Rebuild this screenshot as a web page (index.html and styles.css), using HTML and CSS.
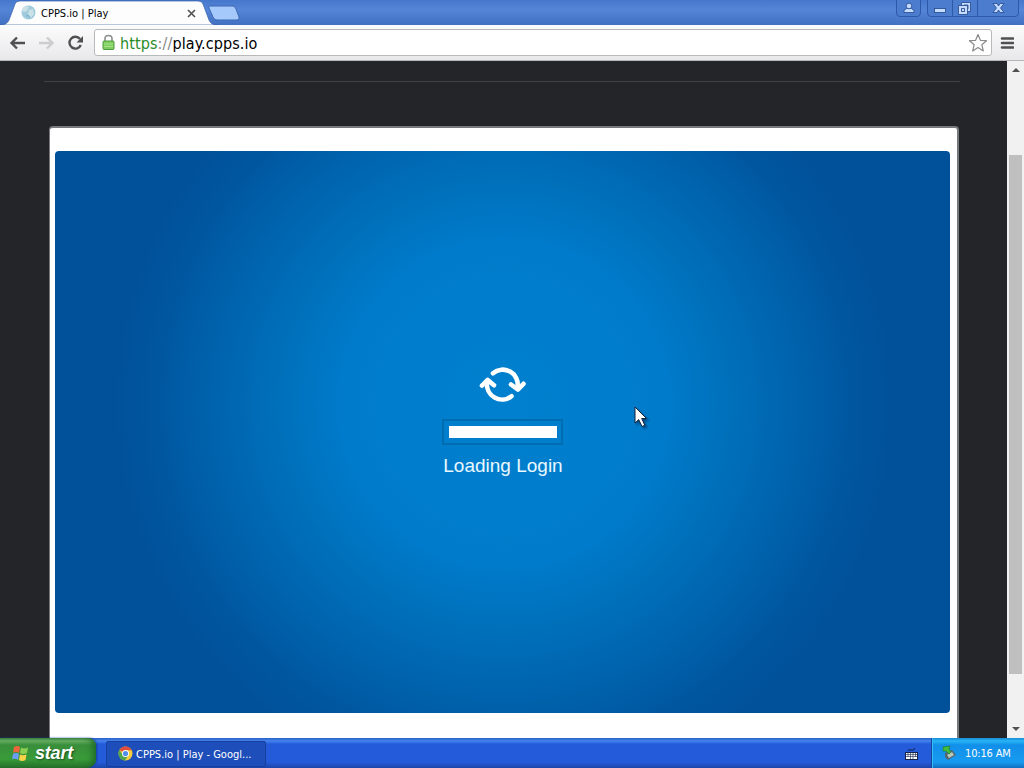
FILE: index.html
```html
<!DOCTYPE html>
<html>
<head>
    <meta charset="utf-8">
    <title>CPPS.io | Play</title>
    <link rel="stylesheet" href="styles.css">
</head>
<body>
    <div class="tabs">
        <svg class="tab-shape" width="240" height="25" viewBox="0 0 240 25">
            <path d="M0 25 Q7 25 9 20 L15 4 Q16 1 20 1 H198 Q202 1 203 4 L209 20 Q211 25 217 25 Z" fill="#fdfdfe" stroke="#315da9" stroke-width=".7"/>
            <path d="M210 6 H233 Q235 6 236 9 L239 17 Q240 20 237 20 H217 Q214 20 213 17 L209 8 Q208 6 210 6Z" fill="#a4c9fa" stroke="#3c68b5"/>
        </svg>
        <svg class="favicon" width="15" height="15" viewBox="0 0 15 15">
            <circle cx="7.500" cy="7.500" r="7" fill="#9fcbdd"/>
            <path d="M2 3 Q5 0 8 2 L6 6 L3 7 L1 6Z M8 5 L12 4 L13 9 L10 13 L7 9Z" fill="#c9e1e7"/>
            <path d="M5 11 Q8 9 9 13" fill="none" stroke="#73aecb"/>
        </svg>
        <span class="tab-title">CPPS.io | Play</span>
        <svg class="tab-close" width="9" height="9" viewBox="0 0 9 9"><path d="M1 1 L8 8 M8 1 L1 8" stroke="#555" stroke-width="1.700"/></svg>
        <svg class="window-buttons" width="128" height="18" viewBox="0 0 128 18">
            <g fill="#4b7ccd" stroke="#2e58a8">
                <path d="M.5 -1 V13 Q.5 16.500 4 16.500 H21 Q24.500 16.500 24.500 13 V-1"/>
                <path d="M31.500 -1 V13 Q31.500 16.500 35 16.500 H119 Q122.500 16.500 122.500 13 V-1 M56.500 0 V16 M81.500 0 V16"/>
            </g>
            <g fill="#c4dcff" stroke="#24478c" stroke-width=".8">
                <path d="M8 12.500 V10.500 L10.500 8.500 H15.500 L18 10.500 V12.500Z"/>
                <circle cx="13" cy="6" r="2.800"/>
                <rect x="38.500" y="8.500" width="11" height="4"/>
                <path fill-rule="evenodd" d="M65.500 2.500 H74.500 V11.500 H65.500Z M68 5 V9 H72 V5Z"/>
                <path fill-rule="evenodd" d="M62.500 5.500 H71.500 V14.500 H62.500Z M65.500 8.500 V11.500 H68.500 V8.500Z"/>
                <path d="M97 3.500 H101 L102.500 6 L104 3.500 H108 L104.500 8 L108 12.500 H104 L102.500 10 L101 12.500 H97 L100.500 8Z"/>
            </g>
        </svg>
    </div>

    <div class="toolbar">
        <svg class="nav" width="88" height="24" viewBox="0 0 88 24" fill="none" stroke-width="2.400">
            <path d="M25 12 H12 M17 6.500 L11.500 12 L17 17.500" stroke="#505052"/>
            <path d="M39 12 H52 M47 6.500 L52.500 12 L47 17.500" stroke="#cdcdcf"/>
            <path d="M80 8 A5.900 5.900 0 1 0 80.800 14" stroke="#505052"/>
            <path d="M83 5 V11.500 H76.500Z" fill="#505052"/>
        </svg>
        <div class="address">
            <svg class="lock" width="13" height="17" viewBox="0 0 13 17">
                <path d="M3 8 V4.500 Q3 1.500 6.500 1.500 Q10 1.500 10 4.500 V8" fill="none" stroke="#8b8f8b" stroke-width="1.600"/>
                <rect x="1" y="7" width="11" height="8.500" rx="1" fill="#80cd61" stroke="#4f9a3c"/>
                <path d="M2 10 H11 M2 12.500 H11" stroke="#a4e386"/>
            </svg>
            <span class="url"><span class="secure">https</span><span class="slashes">://</span>play.cpps.io</span>
            <svg class="star" width="20" height="20" viewBox="0 0 20 20"><path d="M10 1.500 L12.400 7.300 L18.500 7.700 L13.800 11.700 L15.300 18 L10 14.500 L4.700 18 L6.200 11.700 L1.500 7.700 L7.600 7.300Z" fill="#fff" stroke="#8b8b8b" stroke-width="1.200" stroke-linejoin="round"/></svg>
        </div>
        <svg class="menu" width="14" height="14" viewBox="0 0 14 14"><path d="M2 2.500 H13 M2 7 H13 M2 11.500 H13" stroke="#505052" stroke-width="2.600" stroke-linecap="round"/></svg>
    </div>

    <div class="viewport">
        <div class="page">
            <div class="rule"></div>
            <div class="card">
                <div class="game">
                    <svg class="spinner" width="48" height="38" viewBox="0 0 48 38" fill="none" stroke="#fff" stroke-width="4.600" stroke-linecap="round">
                        <path d="M14 7.200 A15 14.800 0 0 1 38.500 21"/>
                        <path d="M32.500 30.200 A15 14.800 0 0 1 8.200 16.400"/>
                        <path d="M32 18.500 L38.800 23.500 L44.500 17.800" stroke-linejoin="round"/>
                        <path d="M3 19.700 L8.700 14 L15 19.200" stroke-linejoin="round"/>
                    </svg>
                    <div class="progress"><div class="bar"></div></div>
                    <div class="loading">Loading Login</div>
                </div>
            </div>
        </div>
        <div class="scrollbar">
            <svg width="8" height="4" viewBox="0 0 8 4"><path d="M0 4 L4 0 L8 4Z" fill="#505050"/></svg>
            <div class="thumb"></div>
            <svg width="8" height="4" viewBox="0 0 8 4"><path d="M0 0 L4 4 L8 0Z" fill="#505050"/></svg>
        </div>
    </div>

    <div class="taskbar">
        <div class="start">
            <svg width="19" height="19" viewBox="0 0 19 19">
                <path d="M3 3 Q6 1 9 3 L8 9 Q5 7 2 9Z" fill="#ef653b"/>
                <path d="M10 3.500 Q13 5.500 17 3.500 L16 9 Q12 11 9 9Z" fill="#8bd052"/>
                <path d="M2 10 Q5 8 8 10 L7 16 Q4 14 1 15.500Z" fill="#6b9df4"/>
                <path d="M9 10.500 Q12 12 15.500 10.500 L14.500 16 Q11 18 8 16Z" fill="#fbd348"/>
            </svg>
            <span>start</span>
        </div>
        <div class="task">
            <svg width="15" height="15" viewBox="0 0 15 15">
                <circle cx="7.500" cy="7.500" r="7" fill="#f5cc3c"/>
                <path d="M7.500 7.500 L1.400 4 A7 7 0 0 1 13.700 4.300 H7.500Z" fill="#df4c3c"/>
                <path d="M1.400 4 A7 7 0 0 0 7 14.500 L10.300 9.200 L7.500 10.500 L4.800 9Z" fill="#4fa64f"/>
                <circle cx="7.500" cy="7.500" r="3.500" fill="#fff"/>
                <circle cx="7.500" cy="7.500" r="2.600" fill="#4e8eea"/>
            </svg>
            <span>CPPS.io | Play - Googl...</span>
        </div>
        <svg class="keyboard" width="14" height="13" viewBox="0 0 14 13">
            <path d="M3 3 Q3 1 6 2 T10 0" fill="none" stroke="#14234c"/>
            <rect x=".5" y="4.500" width="12" height="7" fill="#fff" stroke="#14234c"/>
            <path d="M1 6.500 H12 M1 8.500 H12 M3 4 V9 M5.500 4 V11 M8 4 V11 M10.500 4 V9" stroke="#14234c" stroke-width=".6"/>
        </svg>
        <div class="tray">
            <svg width="16" height="16" viewBox="0 0 16 16">
                <path d="M4 8 L11 5 L15 10 L7 15 L4 12Z" fill="#56656c"/>
                <path d="M6 10 L11 7 L13 10 L8 13Z" fill="#b7c9bd"/>
                <path d="M2 2 L9 1 L8 4 L10 7 L8 9 L5 6 L2 6Z" fill="#42bd3c" stroke="#207e35" stroke-width=".7"/>
            </svg>
            <span>10:16 AM</span>
        </div>
    </div>

    <svg class="cursor" width="14" height="22" viewBox="0 0 14 22"><path d="M1 1 V17 L4.700 13.600 L8 20.500 L10.800 19.200 L7.700 12.500 H12.500Z" fill="#fff" stroke="#10233c"/></svg>
</body>
</html>
```
FILE: styles.css
```css
body {
    margin: 0;
    width: 1024px;
    height: 768px;
    overflow: hidden;
    position: relative;
    display: grid;
    grid-template-rows: 25px 36px 677px 30px;
    font-family: "DejaVu Sans Condensed", "DejaVu Sans", sans-serif;
    font-stretch: condensed;
    font-size: 11px;
}

svg {
    display: block;
    flex-shrink: 0;
}

.tabs {
    position: relative;
    display: flex;
    align-items: center;
    background: linear-gradient(#4577cc, #5585d6 40%, #4170c3);
}

.tab-shape {
    position: absolute;
    left: 0;
    top: 0;
}

.favicon {
    position: relative;
    margin-left: 21px;
}

.tab-title {
    position: relative;
    width: 146px;
    margin: 1px 0 0 5px;
    white-space: nowrap;
}

.tab-close {
    position: relative;
    margin-top: 1px;
}

.window-buttons {
    margin-left: auto;
    align-self: flex-start;
}

.toolbar {
    box-sizing: border-box;
    display: flex;
    align-items: center;
    background: linear-gradient(#fcfcfd, #e8e8ea);
    border-bottom: 1px solid #b7b7ba;
}

.nav {
    width: 88px;
}

.address {
    box-sizing: border-box;
    display: flex;
    align-items: center;
    width: 898px;
    height: 27px;
    margin-left: 6px;
    padding: 0 3px 0 7px;
    background: #fff;
    border: 1px solid #b9b9bb;
    border-radius: 3px;
}

.url {
    margin: 1px 0 0 5px;
    font-size: 16px;
    letter-spacing: 0.1px;
    white-space: nowrap;
}

.secure {
    color: #278b27;
}

.slashes {
    color: #888;
}

.star {
    margin-left: auto;
}

.menu {
    margin-left: 8px;
}

.viewport {
    display: flex;
    overflow: hidden;
    background: #242528;
}

.page {
    width: 1007px;
}

.rule {
    width: 916px;
    height: 1px;
    margin: 20px 0 0 44px;
    background: #414246;
}

.card {
    box-sizing: border-box;
    width: 910px;
    height: 640px;
    margin: 44px 0 0 49px;
    padding: 23px 0 0 5px;
    background: #fff;
    border: solid #77787b;
    border-width: 2px 2px 1px 1px;
    border-radius: 4px;
}

.game {
    display: flex;
    flex-direction: column;
    align-items: center;
    width: 895px;
    height: 562px;
    border-radius: 4px;
    background: radial-gradient(circle at 50.200% 45%, #0080ce 0, #007dcc 120px, #007aca 165px, #0073be 210px, #006ab5 255px, #0060aa 305px, #00569f 350px, #00519a 390px);
}

.spinner {
    margin: 215px 0 0 1px;
}

.progress {
    box-sizing: border-box;
    width: 121px;
    height: 26px;
    margin-top: 15px;
    padding: 5px;
    border: 2px solid #006db0;
}

.bar {
    width: 108px;
    height: 12px;
    background: #fff;
}

.loading {
    margin: 10px 0 0 1px;
    font-family: "Liberation Sans", Arial, sans-serif;
    font-size: 19px;
    line-height: 22px;
    color: #eaf8ff;
    white-space: nowrap;
}

.scrollbar {
    box-sizing: border-box;
    display: flex;
    flex-direction: column;
    align-items: center;
    width: 17px;
    padding: 7px 0;
    background: #f1f1f2;
}

.thumb {
    width: 13px;
    height: 519px;
    margin: 83px 0 auto;
    background: #bfbfc0;
}

.taskbar {
    display: flex;
    align-items: center;
    color: #fff;
    background: linear-gradient(#2b61c7, #4484ed 3px, #245bdb 6px, #245bdb 24px, #1b45a8);
}

.start {
    box-sizing: border-box;
    display: flex;
    align-items: center;
    width: 96px;
    height: 30px;
    padding-left: 11px;
    border-radius: 0 8px 9px 0;
    background: linear-gradient(#3b8643, #65ad61 3px, #398e3b 7px, #399b38 21px, #246f29);
    box-shadow: inset -7px 0 7px -4px #1d6928, 1px 0 2px #153d9c;
}

.start span {
    margin: 1px 0 0 5px;
    font-family: "Liberation Sans", Arial, sans-serif;
    font-size: 18px;
    font-style: italic;
    font-weight: bold;
    letter-spacing: -0.2px;
    text-shadow: 1px 1px 2px #174b21;
}

.task {
    box-sizing: border-box;
    display: flex;
    align-items: center;
    width: 160px;
    height: 26px;
    margin: 1px 0 0 10px;
    padding-left: 11px;
    border: 1px solid #173f9d;
    border-radius: 2px;
    background: #1e4eb9;
}

.task span {
    margin: 1px 0 0 3px;
    white-space: nowrap;
}

.keyboard {
    margin: 2px 12px 0 auto;
}

.tray {
    box-sizing: border-box;
    display: flex;
    align-items: center;
    width: 93px;
    height: 30px;
    padding-left: 9px;
    border-left: 1px solid #13489d;
    background: linear-gradient(#178ad7, #28b5f5 3px, #128fe9 7px, #179bf0 24px, #126ebe);
    box-shadow: inset 1px 0 #36bdf7;
}

.tray span {
    margin-left: 8px;
    letter-spacing: -0.15px;
    white-space: nowrap;
}

.cursor {
    position: absolute;
    left: 634px;
    top: 406px;
    filter: drop-shadow(2px 2px 1px rgba(0, 25, 60, 0.5));
}
```
